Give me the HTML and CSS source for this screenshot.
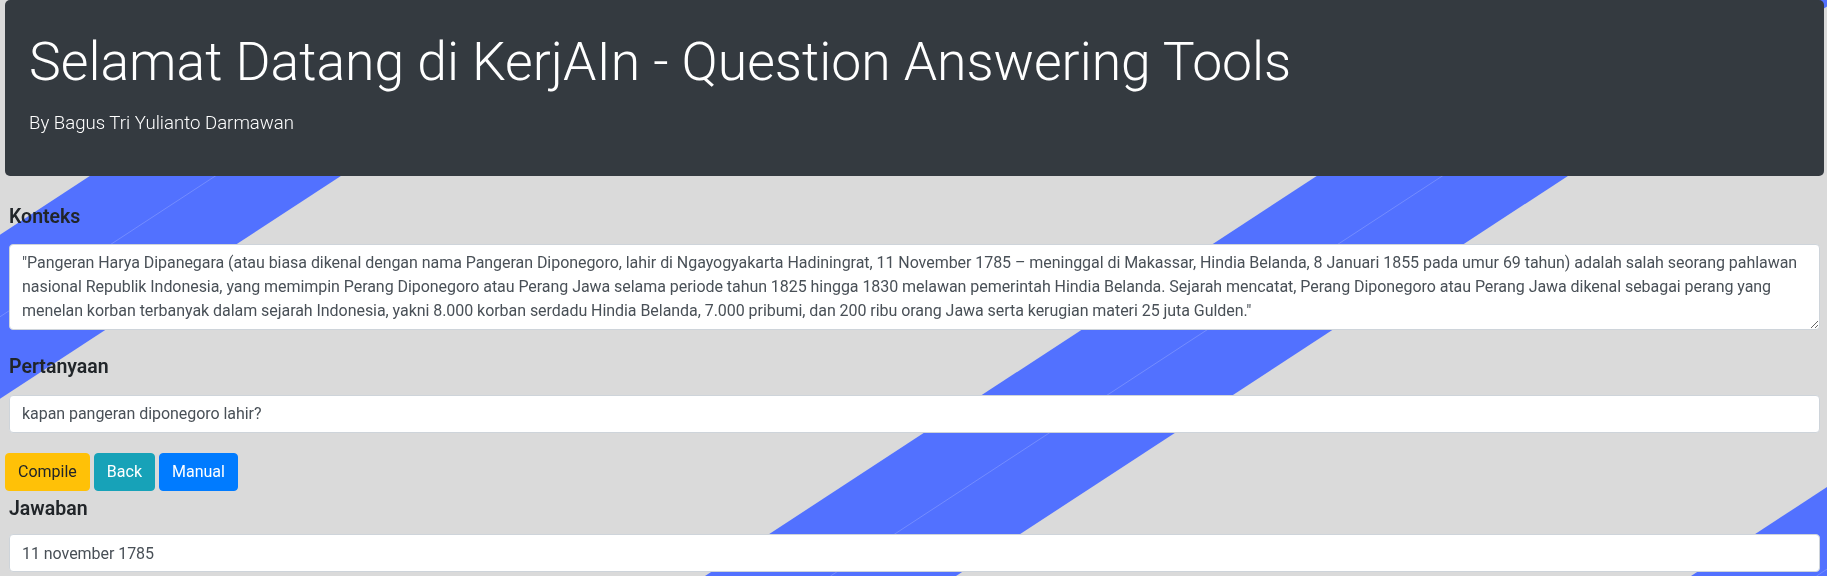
FILE: index.html
```html
<!DOCTYPE html>
<html lang="id">
<head>
<meta charset="utf-8">
<title>KerjAIn - Question Answering Tools</title>
<link rel="stylesheet" href="styles.css">
</head>
<body>
<svg class="backdrop" viewBox="0 0 1827 576" preserveAspectRatio="none" aria-hidden="true">
  <polygon class="stripe" points="359,0 610,0 -271,576 -522,576"/>
  <polygon class="stripe" points="1586,0 1837,0 956,576 705,576"/>
  <polygon class="stripe" points="2572,0 2823,0 1942,576 1691,576"/>
  <line class="seam" x1="484.5" y1="0" x2="-396.5" y2="576"/>
  <line class="seam" x1="1711.5" y1="0" x2="830.5" y2="576"/>
  <line class="seam" x1="2697.5" y1="0" x2="1816.5" y2="576"/>
</svg>

<header class="jumbo">
  <h1 class="jumbo-title">Selamat Datang di KerjAIn - Question Answering Tools</h1>
  <p class="jumbo-lead">By Bagus Tri Yulianto Darmawan</p>
</header>

<main class="qa-form">
  <section class="field field-first">
    <label class="field-label" for="konteks">Konteks</label>
    <textarea id="konteks" class="control control-area" rows="3">"Pangeran Harya Dipanegara (atau biasa dikenal dengan nama Pangeran Diponegoro, lahir di Ngayogyakarta Hadiningrat, 11 November 1785 – meninggal di Makassar, Hindia Belanda, 8 Januari 1855 pada umur 69 tahun) adalah salah seorang pahlawan nasional Republik Indonesia, yang memimpin Perang Diponegoro atau Perang Jawa selama periode tahun 1825 hingga 1830 melawan pemerintah Hindia Belanda. Sejarah mencatat, Perang Diponegoro atau Perang Jawa dikenal sebagai perang yang menelan korban terbanyak dalam sejarah Indonesia, yakni 8.000 korban serdadu Hindia Belanda, 7.000 pribumi, dan 200 ribu orang Jawa serta kerugian materi 25 juta Gulden."</textarea>
  </section>

  <section class="field field-second">
    <label class="field-label" for="pertanyaan">Pertanyaan</label>
    <input id="pertanyaan" class="control" type="text" value="kapan pangeran diponegoro lahir?">
  </section>

  <div class="actions">
    <button class="btn btn-warning" type="button">Compile</button>
    <button class="btn btn-info" type="button">Back</button>
    <button class="btn btn-primary" type="button">Manual</button>
  </div>

  <section class="field field-third">
    <label class="field-label label-tight" for="jawaban">Jawaban</label>
    <input id="jawaban" class="control" type="text" value="11 november 1785">
  </section>
</main>
</body>
</html>
```
FILE: styles.css
```css
html {
  background: #dadada;
}

body {
  margin: 0;
  padding: 0 3px 0 5px;
  font-family: Roboto, "Liberation Sans", sans-serif;
  font-size: 16px;
  line-height: 1.5;
  color: #212529;
}

.backdrop {
  position: fixed;
  left: 0;
  top: 0;
  width: 100%;
  height: 100%;
  z-index: -1;
}

.stripe {
  fill: #5271ff;
}

.seam {
  stroke: rgba(255, 255, 255, 0.28);
  stroke-width: 0.7;
}

/* Header */
.jumbo {
  background: #343a40;
  color: #fff;
  border-radius: 5px;
  padding: 30px 24px 39px;
}

.jumbo-title {
  margin: 0 0 15px;
  font-size: 53.5px;
  font-weight: 300;
  line-height: 64px;
}

.jumbo-lead {
  margin: 0;
  font-size: 18.6px;
  font-weight: 300;
  line-height: 28px;
}

/* Form */
.qa-form {
  display: flex;
  flex-direction: column;
}

.field {
  display: flex;
  flex-direction: column;
  margin: 0 4px;
}

.field-first {
  padding-top: 29px;
}

.field-second {
  padding-top: 25px;
}

.field-third {
  padding-top: 6px;
}

.field-label {
  font-size: 19.5px;
  font-weight: 600;
  line-height: 23.4px;
  margin-bottom: 16px;
  color: #212529;
}

.label-tight {
  margin-bottom: 14px;
}

.control {
  display: block;
  box-sizing: border-box;
  width: 100%;
  margin: 0;
  padding: 6px 12px;
  font-family: Roboto, "Liberation Sans", sans-serif;
  font-size: 16px;
  letter-spacing: -0.05px;
  line-height: 24px;
  color: #495057;
  background: #fff;
  border: 1px solid #ced4da;
  border-radius: 4px;
  height: 38px;
}

.control-area {
  height: auto;
  resize: vertical;
}

/* Buttons */
.actions {
  display: flex;
  gap: 4px;
  margin-top: 20px;
}

.btn {
  font-family: Roboto, "Liberation Sans", sans-serif;
  font-size: 16px;
  line-height: 24px;
  padding: 6px 12px;
  border: 1px solid transparent;
  border-radius: 4px;
  cursor: pointer;
}

.btn-warning {
  background: #ffc107;
  border-color: #ffc107;
  color: #212529;
}

.btn-info {
  background: #17a2b8;
  border-color: #17a2b8;
  color: #fff;
}

.btn-primary {
  background: #007bff;
  border-color: #007bff;
  color: #fff;
}
```
